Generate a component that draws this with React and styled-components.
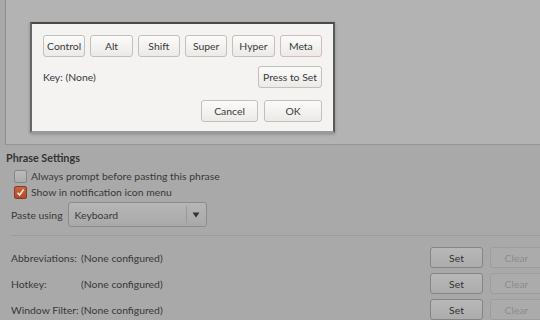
import styled, { createGlobalStyle } from "styled-components";

const GlobalStyle = createGlobalStyle`
  body {
    margin: 0;
    background: #a9a9a9;
    font-family: Lato, "Open Sans", sans-serif;
    font-size: 10.4px;
    color: #383838;
  }
`;

const Page = styled.div`
  position: relative;
  width: 540px;
  height: 320px;
  overflow: hidden;
  background: #a9a9a9;
  white-space: nowrap;
`;

const TopPane = styled.div`
  height: 144px;
  margin-left: 5px;
  background: #b3b3b3;
  border-left: 1px solid #8e8e8e;
  border-bottom: 1px solid #959595;
`;

const Section = styled.div`
  padding: 0 0 0 6px;
`;

const Heading = styled.div`
  margin-top: 6px;
  height: 14px;
  line-height: 14px;
  font-size: 10.8px;
  font-weight: bold;
  color: #333;
`;

const CheckRow = styled.label`
  display: flex;
  align-items: center;
  gap: 4px;
  height: 16px;
  margin-left: 8px;
  &:first-of-type {
    margin-top: 3px;
  }
`;

const Box = styled.span`
  width: 11px;
  height: 11px;
  border-radius: 2px;
  border: 1px solid ${(p) => (p.checked ? "#8a3a24" : "#878787")};
  background: ${(p) =>
    p.checked ? "linear-gradient(#c8653f, #ad4b2d)" : "linear-gradient(#bcbcbc, #ababab)"};
  display: flex;
  align-items: center;
  justify-content: center;
`;

const PasteRow = styled.div`
  display: flex;
  align-items: center;
  gap: 5px;
  margin: 2px 0 0 5px;
`;

const Combo = styled.div`
  display: flex;
  align-items: center;
  width: 137px;
  height: 23px;
  border: 1px solid #8c8c8c;
  border-radius: 3px;
  background: linear-gradient(#b6b6b6, #a9a9a9);
`;

const ComboText = styled.span`
  flex: 1;
  padding-left: 6px;
`;

const ComboArrow = styled.span`
  width: 19px;
  height: 17px;
  border-left: 1px solid #999;
  display: flex;
  align-items: center;
  justify-content: center;
`;

const Separator = styled.div`
  height: 1px;
  margin: 8px 0 0 5px;
  background: #9c9c9c;
`;

const Grid = styled.div`
  display: grid;
  grid-template-columns: 70px 349px 53px 60px;
  row-gap: 5px;
  align-items: center;
  margin: 11px 0 0 11px;
`;

const Button = styled.div`
  height: 19px;
  display: flex;
  align-items: center;
  justify-content: center;
  margin-left: ${(p) => (p.$disabled ? "7px" : "0")};
  border: 1px solid ${(p) => (p.$disabled ? "#9d9d9d" : "#858585")};
  border-radius: 3px;
  background: ${(p) =>
    p.$disabled ? "#ababab" : "linear-gradient(#b8b8b8, #acacac)"};
  color: ${(p) => (p.$disabled ? "#8c8c8c" : "#333")};
`;

const Dialog = styled.div`
  position: absolute;
  left: 30px;
  top: 22px;
  width: 305px;
  height: 111px;
  box-sizing: border-box;
  padding: 11px 11px 0 11px;
  display: flex;
  flex-direction: column;
  background: #f4f3f2;
  border: 2px solid #4a4a4a;
  border-bottom-color: #9a9a9a;
  border-left-color: #666;
  border-right-color: #5a5a5a;
  box-shadow: 0 1px 3px rgba(0, 0, 0, 0.25);
  color: #3a3a3a;
`;

const ModRow = styled.div`
  display: flex;
  gap: 5px;
`;

const DlgButton = styled.div`
  flex: ${(p) => (p.$grow ? 1 : "none")};
  width: ${(p) => p.$w || "auto"};
  height: 20px;
  display: flex;
  align-items: center;
  justify-content: center;
  border: 1px solid ${(p) => (p.$focus ? "#d6b9b9" : "#c3c0bb")};
  border-radius: 3px;
  background: linear-gradient(#fbfbfa, #eceae7);
  color: #3a3a3a;
`;

const KeyRow = styled.div`
  display: flex;
  align-items: center;
  justify-content: space-between;
  margin-top: 9px;
`;

const ActionRow = styled.div`
  display: flex;
  justify-content: flex-end;
  gap: 6px;
  margin-top: 12px;
`;

const Check = () => (
  <svg width="9" height="9" viewBox="0 0 9 9">
    <path d="M1.5 4.8 L3.6 7 L7.6 1.6" fill="none" stroke="#f4e9e2" strokeWidth="1.6" />
  </svg>
);

const rows = ["Abbreviations:", "Hotkey:", "Window Filter:"];

const App = () => (
  <Page>
    <GlobalStyle />
    <TopPane />
    <Section>
      <Heading>Phrase Settings</Heading>
      <CheckRow>
        <Box />
        Always prompt before pasting this phrase
      </CheckRow>
      <CheckRow>
        <Box checked>
          <Check />
        </Box>
        Show in notification icon menu
      </CheckRow>
      <PasteRow>
        Paste using
        <Combo>
          <ComboText>Keyboard</ComboText>
          <ComboArrow>
            <svg width="8" height="6" viewBox="0 0 8 6">
              <path d="M0.5 0.5 H7.5 L4 5.5 Z" fill="#333" />
            </svg>
          </ComboArrow>
        </Combo>
      </PasteRow>
      <Separator />
    </Section>
    <Grid>
      {rows.flatMap((r) => [
        <span key={r + "l"}>{r}</span>,
        <span key={r + "v"}>(None configured)</span>,
        <Button key={r + "s"}>Set</Button>,
        <Button key={r + "c"} $disabled>
          Clear
        </Button>,
      ])}
    </Grid>
    <Dialog>
      <ModRow>
        {["Control", "Alt", "Shift", "Super", "Hyper", "Meta"].map((m) => (
          <DlgButton key={m} $grow $focus={m === "Meta"}>
            {m}
          </DlgButton>
        ))}
      </ModRow>
      <KeyRow>
        <span>Key: (None)</span>
        <DlgButton $w="62px">Press to Set</DlgButton>
      </KeyRow>
      <ActionRow>
        <DlgButton $w="55px">Cancel</DlgButton>
        <DlgButton $w="56px">OK</DlgButton>
      </ActionRow>
    </Dialog>
  </Page>
);

export default App;
